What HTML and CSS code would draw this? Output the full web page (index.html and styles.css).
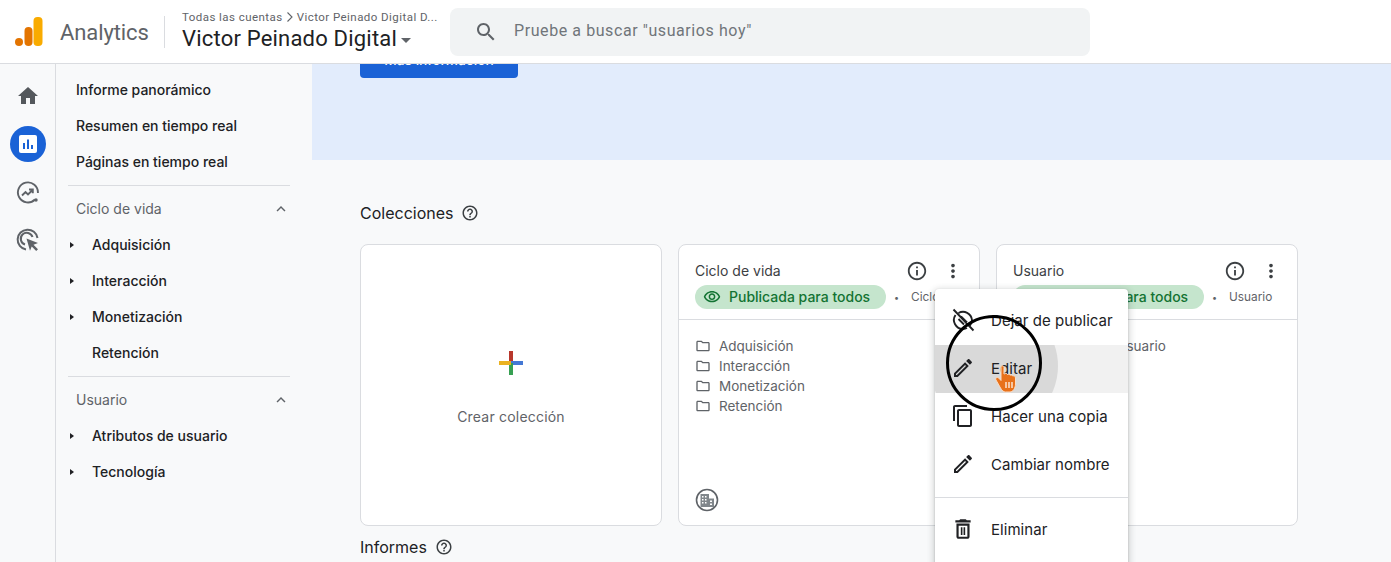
FILE: index.html
```html
<!DOCTYPE html>
<html lang="es">
<head>
<meta charset="utf-8">
<title>Analytics</title>
<link rel="stylesheet" href="styles.css">
</head>
<body>
<svg class="defs" width="0" height="0" aria-hidden="true">
  <symbol id="i-home" viewBox="0 0 24 24"><path d="M10 20v-6h4v6h5v-8h3L12 3 2 12h3v8z"/></symbol>
  <symbol id="i-info" viewBox="0 0 24 24"><path d="M11 7h2v2h-2zm0 4h2v6h-2zm1-9C6.48 2 2 6.48 2 12s4.48 10 10 10 10-4.48 10-10S17.52 2 12 2zm0 18c-4.41 0-8-3.59-8-8s3.59-8 8-8 8 3.59 8 8-3.59 8-8 8z"/></symbol>
  <symbol id="i-more" viewBox="0 0 24 24"><path d="M12 8c1.1 0 2-.9 2-2s-.9-2-2-2-2 .9-2 2 .9 2 2 2zm0 2c-1.1 0-2 .9-2 2s.9 2 2 2 2-.9 2-2-.9-2-2-2zm0 6c-1.1 0-2 .9-2 2s.9 2 2 2 2-.9 2-2-.9-2-2-2z"/></symbol>
  <symbol id="i-search" viewBox="0 0 24 24"><path d="M15.5 14h-.79l-.28-.27C15.41 12.59 16 11.11 16 9.5 16 5.91 13.09 3 9.5 3S3 5.91 3 9.5 5.91 16 9.5 16c1.61 0 3.09-.59 4.23-1.57l.27.28v.79l5 4.99L20.49 19l-4.99-5zm-6 0C7.01 14 5 11.99 5 9.5S7.01 5 9.5 5 14 7.01 14 9.5 11.99 14 9.5 14z"/></symbol>
  <symbol id="i-eye" viewBox="0 0 24 24"><path d="M12 6c3.79 0 7.17 2.13 8.82 5.5C19.17 14.87 15.79 17 12 17s-7.17-2.13-8.82-5.5C4.83 8.13 8.21 6 12 6m0-2C7 4 2.73 7.11 1 11.5 2.73 15.89 7 19 12 19s9.27-3.11 11-7.5C21.27 7.11 17 4 12 4zm0 5c1.38 0 2.5 1.12 2.5 2.5S13.38 14 12 14s-2.5-1.12-2.5-2.5S10.62 9 12 9m0-2c-2.48 0-4.5 2.02-4.5 4.5S9.52 16 12 16s4.5-2.02 4.5-4.5S14.48 7 12 7z"/></symbol>
  <symbol id="i-folder" viewBox="0 0 24 24"><path d="M9.17 6l2 2H20v10H4V6h5.17M10 4H4c-1.1 0-1.99.9-1.99 2L2 18c0 1.1.9 2 2 2h16c1.1 0 2-.9 2-2V8c0-1.1-.9-2-2-2h-8l-2-2z"/></symbol>
  <symbol id="i-edit" viewBox="0 0 24 24"><path d="M14.06 9.02l.92.92L5.92 19H5v-.92l9.06-9.06M17.66 3c-.25 0-.51.1-.7.29l-1.83 1.83 3.75 3.75 1.83-1.83c.39-.39.39-1.02 0-1.41l-2.34-2.34c-.2-.2-.45-.29-.71-.29zm-3.6 3.19L3 17.25V21h3.75L17.81 9.94l-3.75-3.75z"/></symbol>
  <symbol id="i-copy" viewBox="0 0 24 24"><path d="M16 1H4c-1.1 0-2 .9-2 2v14h2V3h12V1zm3 4H8c-1.1 0-2 .9-2 2v14c0 1.1.9 2 2 2h11c1.1 0 2-.9 2-2V7c0-1.1-.9-2-2-2zm0 16H8V7h11v14z"/></symbol>
  <symbol id="i-delete" viewBox="1 1 22 22"><path d="M16 9v10H8V9h8m-1.500-6h-5l-1 1H5v2h14V4h-3.500l-1-1zM18 7H6v12c0 1.100.9 2 2 2h8c1.100 0 2-.9 2-2V7zM10 10.500h1.500v7H10zM12.500 10.500H14v7h-1.500z"/></symbol>
  <symbol id="i-help" viewBox="0 0 24 24"><path d="M11 18h2v-2h-2v2zm1-16C6.48 2 2 6.48 2 12s4.48 10 10 10 10-4.48 10-10S17.52 2 12 2zm0 18c-4.41 0-8-3.59-8-8s3.59-8 8-8 8 3.59 8 8-3.59 8-8 8zm0-14c-2.21 0-4 1.79-4 4h2c0-1.100.9-2 2-2s2 .9 2 2c0 2-3 1.750-3 5h2c0-2.250 3-2.500 3-5 0-2.210-1.790-4-4-4z"/></symbol>
  <symbol id="i-less" viewBox="0 0 24 24"><path d="M12 8l-6 6 1.410 1.410L12 10.830l4.590 4.580L18 14z"/></symbol>
  <symbol id="i-unpub" viewBox="0 0 24 24"><path fill="none" stroke="currentColor" stroke-width="1.900" d="M7.500 5A9 9 0 0 1 21 12a9 9 0 0 1-2 5.500M4.500 7A9 9 0 0 0 12 21c1.500 0 3-.4 4-1M2.500 1.500l20 21M7.500 11l5.500 5.500M10 8.500l6 6"/></symbol>
</svg>

<header class="topbar">
  <div class="brand">
    <svg class="logo" width="28" height="32" viewBox="0 0 28 32" aria-hidden="true">
      <circle cx="4" cy="26" r="4" fill="#e37400"/>
      <rect x="9.500" y="11" width="8" height="19" rx="4" fill="#e37400"/>
      <rect x="18.500" y="1" width="9" height="29" rx="4" fill="#f9ab00"/>
    </svg>
    <span class="brand-name">Analytics</span>
  </div>
  <div class="account">
    <div class="crumbs">Todas las cuentas <svg class="crumb-sep" width="8" height="12" viewBox="0 0 8 12" aria-hidden="true"><path d="M1.500 1.500 6 6l-4.500 4.500" fill="none" stroke="#5f6368" stroke-width="1.100"/></svg> Victor Peinado Digital D...</div>
    <div class="account-name">Victor Peinado Digital<span class="caret"></span></div>
  </div>
  <div class="search">
    <svg class="search-icon"><use href="#i-search"/></svg>
    <span>Pruebe a buscar "usuarios hoy"</span>
  </div>
</header>

<div class="shell">
  <aside class="rail">
    <div class="rail-item"><svg class="rail-icon rail-home"><use href="#i-home"/></svg></div>
    <div class="rail-item">
      <span class="rail-active">
        <svg width="22" height="22" viewBox="0 0 22 22" aria-hidden="true"><rect x="2" y="2" width="18" height="18" rx="2" fill="#fff"/><path d="M6 10h2v6H6zM10 6.500h2V16h-2zM14 12h2v4h-2z" fill="#1a62d6"/></svg>
      </span>
    </div>
    <div class="rail-item">
      <svg class="rail-icon" viewBox="0 0 24 24" aria-hidden="true"><g fill="none" stroke="#5f6368" stroke-width="1.900"><path d="M19 19.500A10 10 0 1 1 21.900 13"/><path d="M6 15.500l3.500-3.500 2.500 2.500 4.500-4.500M13 9.500h3.800v3.800"/></g><circle cx="20" cy="20" r="1.700" fill="#5f6368"/></svg>
    </div>
    <div class="rail-item">
      <svg class="rail-icon" viewBox="0 0 24 24" aria-hidden="true"><g fill="none" stroke="#5f6368" stroke-width="2"><path d="M21.500 10A10 10 0 1 0 10 21.500"/><path d="M16.500 9A6 6 0 1 0 9 16.500"/></g><path d="M10.500 10.500l11.500 4.500-4.500 1.800 4.500 4.500-1.800 1.800-4.500-4.500-1.700 4.200z" fill="#5f6368"/></svg>
    </div>
  </aside>

  <nav class="sidenav">
    <a class="nav-row">Informe panorámico</a>
    <a class="nav-row">Resumen en tiempo real</a>
    <a class="nav-row">Páginas en tiempo real</a>
    <hr class="nav-rule">
    <div class="nav-row nav-head">Ciclo de vida<svg class="chev"><use href="#i-less"/></svg></div>
    <a class="nav-row nav-sub"><span class="tri"></span>Adquisición</a>
    <a class="nav-row nav-sub"><span class="tri"></span>Interacción</a>
    <a class="nav-row nav-sub"><span class="tri"></span>Monetización</a>
    <a class="nav-row nav-sub"><span class="tri tri-none"></span>Retención</a>
    <hr class="nav-rule">
    <div class="nav-row nav-head">Usuario<svg class="chev"><use href="#i-less"/></svg></div>
    <a class="nav-row nav-sub"><span class="tri"></span>Atributos de usuario</a>
    <a class="nav-row nav-sub"><span class="tri"></span>Tecnología</a>
  </nav>

  <main class="main">
    <section class="banner"><button class="cta">Más información</button></section>
    <h2 class="section-title sec-first">Colecciones<svg class="help"><use href="#i-help"/></svg></h2>
    <div class="cards">
      <article class="card card-create">
        <svg class="plus" width="24" height="24" viewBox="0 0 24 24" aria-hidden="true">
          <rect x="10" y="0" width="4" height="12" fill="#b8372c"/>
          <rect x="12" y="10" width="12" height="4" fill="#4478d4"/>
          <rect x="10" y="12" width="4" height="12" fill="#37a052"/>
          <rect x="0" y="10" width="12" height="4" fill="#eab221"/>
        </svg>
        <span class="create-label">Crear colección</span>
      </article>

      <article class="card">
        <div class="card-top">
          <div class="card-title-row"><span class="card-title">Ciclo de vida</span><svg class="tool tool-info"><use href="#i-info"/></svg><svg class="tool"><use href="#i-more"/></svg></div>
          <div class="chip-row"><span class="chip"><svg class="chip-eye"><use href="#i-eye"/></svg>Publicada para todos</span><span class="dot">•</span><span class="meta">Ciclo de vida</span></div>
        </div>
        <ul class="folders">
          <li><svg class="folder"><use href="#i-folder"/></svg>Adquisición</li>
          <li><svg class="folder"><use href="#i-folder"/></svg>Interacción</li>
          <li><svg class="folder"><use href="#i-folder"/></svg>Monetización</li>
          <li><svg class="folder"><use href="#i-folder"/></svg>Retención</li>
        </ul>
        <svg class="org" width="24" height="24" viewBox="0 0 24 24" aria-hidden="true">
          <circle cx="12" cy="12" r="10.500" fill="#fff" stroke="#5f6368" stroke-width="1.600"/>
          <path d="M5.500 6h8.500v13H5.500zM14 10.500h5V19h-5z" fill="#80868b"/>
          <path d="M7 8h1.500v1.500H7zM10 8h1.500v1.500H10zM7 11h1.500v1.500H7zM10 11h1.500v1.500H10zM7 14h1.500v1.500H7zM10 14h1.500v1.500H10zM15 12.500h2V14h-2zM15 15.500h2V17h-2z" fill="#fff"/>
        </svg>
      </article>

      <article class="card">
        <div class="card-top">
          <div class="card-title-row"><span class="card-title">Usuario</span><svg class="tool tool-info"><use href="#i-info"/></svg><svg class="tool"><use href="#i-more"/></svg></div>
          <div class="chip-row"><span class="chip"><svg class="chip-eye"><use href="#i-eye"/></svg>Publicada para todos</span><span class="dot">•</span><span class="meta">Usuario</span></div>
        </div>
        <ul class="folders">
          <li><svg class="folder"><use href="#i-folder"/></svg>Atributos de usuario</li>
        </ul>
      </article>
    </div>
    <h2 class="section-title sec-second">Informes<svg class="help"><use href="#i-help"/></svg></h2>
  </main>
</div>

<div class="menu">
  <div class="menu-row"><svg class="menu-icon"><use href="#i-unpub"/></svg>Dejar de publicar</div>
  <div class="menu-row menu-hover"><span class="ripple"></span><svg class="menu-icon"><use href="#i-edit"/></svg><span class="menu-text">Editar</span></div>
  <div class="menu-row"><svg class="menu-icon"><use href="#i-copy"/></svg>Hacer una copia</div>
  <div class="menu-row"><svg class="menu-icon"><use href="#i-edit"/></svg>Cambiar nombre</div>
  <hr class="menu-rule">
  <div class="menu-row"><svg class="menu-icon"><use href="#i-delete"/></svg>Eliminar</div>
</div>
<div class="spot"></div>
<svg class="hand" width="24" height="30" viewBox="0 0 24 30" aria-hidden="true">
  <path d="M6 3.500c0-2.200 3-2.200 3 0V10l1.500-.5c1-.3 1.800.3 2 1 .8-.5 2-.3 2.500.7.900-.5 2.300-.2 2.700.8 1-.5 2.800.2 2.800 2v6c0 4-2.500 8-5.500 8h-4.500c-2 0-3.500-1.500-5-4L1 16c-1-1.800 1.200-3.500 2.700-2L6 16.500z" fill="#e8711a" stroke="#fbdcc4" stroke-width="1"/>
  <path d="M11 18v6M14 18v6M17 18v6" stroke="#fff" stroke-width="1.200" fill="none"/>
</svg>
</body>
</html>
```
FILE: styles.css
```css
* { box-sizing: border-box; }
html, body { height: 100%; }
body {
  margin: 0;
  height: 562px;
  overflow: hidden;
  position: relative;
  background: #f8f9fa;
  color: #202124;
  font-family: Inter, Roboto, "Liberation Sans", sans-serif;
  font-size: 14px;
}
.defs { position: absolute; }
svg { fill: currentColor; display: block; flex: none; }

.topbar {
  height: 64px;
  display: flex;
  align-items: center;
  background: #fff;
  border-bottom: 1px solid #dadce0;
  position: relative;
  z-index: 2;
}
.brand {
  display: flex;
  align-items: center;
  width: 165px;
  height: 32px;
  padding-left: 15px;
  border-right: 1px solid #dadce0;
}
.logo { margin-right: 17px; }
.brand-name { font-family: Roboto, sans-serif; font-size: 22px; letter-spacing: -.1px; color: #5f6368; position: relative; top: 1px; }
.account { width: 268px; margin-left: 17px; }
.crumbs {
  display: flex;
  align-items: center;
  gap: 3px;
  font-family: Roboto, sans-serif;
  font-size: 11.5px;
  line-height: 16px;
  margin-top: -2px;
  color: #5f6368;
  letter-spacing: .45px;
  white-space: nowrap;
}
.account-name {
  display: flex;
  align-items: center;
  font-family: Roboto, sans-serif;
  font-size: 22px;
  line-height: 28px;
  color: #202124;
  letter-spacing: .2px;
  white-space: nowrap;
}
.caret {
  margin-left: 4px;
  margin-top: 3px;
  border: 5px solid transparent;
  border-top-color: #5f6368;
  border-bottom-width: 0;
}
.search {
  width: 640px;
  height: 48px;
  display: flex;
  align-items: center;
  background: #f1f3f4;
  border-radius: 8px;
  padding-left: 24px;
  font-family: Roboto, sans-serif;
  font-size: 16px;
  letter-spacing: .58px;
  color: #70757a;
}
.search span { position: relative; top: -1px; }
.search-icon { width: 24px; height: 24px; margin-right: 16px; color: #5f6368; }

.shell { display: flex; height: 498px; }
.rail {
  width: 56px;
  flex: none;
  padding-top: 8px;
  border-right: 1px solid #dadce0;
  display: flex;
  flex-direction: column;
}
.rail-item { height: 48px; display: flex; align-items: center; justify-content: center; }
.rail-icon { width: 24px; height: 24px; color: #5f6368; }
.rail-home { color: #54585c; }
.rail-active {
  width: 36px;
  height: 36px;
  border-radius: 50%;
  background: #1a62d6;
  display: flex;
  align-items: center;
  justify-content: center;
}

.sidenav { width: 256px; flex: none; padding: 8px 0 0 12px; }
.nav-row {
  height: 36px;
  display: flex;
  align-items: center;
  padding: 0 0 2px 8px;
  font-weight: 500;
  font-size: 14px;
  color: #202124;
}
.nav-sub { padding-left: 0; }
.nav-head { font-weight: 400; color: #5f6368; justify-content: space-between; width: 222px; }
.tri {
  display: block;
  height: 0;
  width: 0;
  border: solid transparent;
  border-width: 3.500px 0 3.500px 4px;
  border-left-color: #202124;
  margin: 2px 18px 0 2px;
}
.tri-none { border-left-color: transparent; }
.chev { width: 18px; height: 18px; margin-top: 2px; color: #5f6368; }
.nav-rule { border: 0; border-top: 1px solid #dadce0; margin: 5px 0 5px 0; width: 222px; }

.main { flex: 1; min-width: 0; overflow: hidden; }
.banner { height: 96px; background: #e2ecfc; padding-left: 48px; overflow: hidden; }
.cta {
  display: block;
  width: 158px;
  height: 36px;
  margin-top: -22px;
  border: 0;
  border-radius: 4px;
  background: #1a62d6;
  color: #fff;
  font: 500 13.7px Inter, sans-serif;
}
.section-title {
  display: flex;
  align-items: center;
  height: 24px;
  margin: 0 0 0 48px;
  font-size: 16px;
  font-weight: 400;
  color: #202124;
}
.sec-first { margin-top: 41px; }
.sec-second { margin-top: 9px; }
.help { width: 18px; height: 18px; margin-left: 8px; color: #3c4043; }

.cards {
  display: grid;
  grid-template-columns: repeat(3, 302px);
  gap: 16px;
  margin: 19px 0 0 48px;
}
.card {
  height: 282px;
  background: #fff;
  border: 1px solid #dadce0;
  border-radius: 8px;
  position: relative;
}
.card-create {
  display: flex;
  flex-direction: column;
  align-items: center;
  padding-top: 106px;
}
.create-label { margin-top: 33px; font-size: 14px; letter-spacing: .2px; color: #5f6368; }
.card-top { height: 75px; border-bottom: 1px solid #dadce0; padding: 14px 0 0 16px; }
.card-title-row { display: flex; align-items: center; height: 24px; padding-right: 15px; }
.card-title { flex: 1; padding-bottom: 2px; font-size: 14px; color: #3c4043; }
.tool { width: 22px; height: 22px; color: #3c4043; }
.tool-info { margin-right: 14px; }
.chip-row { display: flex; align-items: center; height: 24px; margin-top: 2px; white-space: nowrap; overflow: hidden; }
.chip {
  display: flex;
  flex: none;
  align-items: center;
  width: 191px;
  height: 24px;
  padding: 0 0 2px 8px;
  border-radius: 12px;
  background: #c5e5cd;
  color: #137333;
  font-weight: 500;
  font-size: 14px;
}
.chip-eye { width: 18px; height: 18px; margin: 2px 8px 0 0; }
.dot { font-size: 9px; color: #5f6368; margin: 0 12px 0 8px; }
.meta { font-size: 11.8px; color: #5f6368; }
.folders { list-style: none; margin: 0; padding: 16px 0 0 16px; }
.folders li {
  display: flex;
  align-items: center;
  height: 20px;
  font-size: 13.5px;
  color: #5f6368;
}
.folder { width: 16px; height: 16px; margin-right: 8px; color: #5f6368; }
.org { position: absolute; left: 16px; bottom: 13px; }

.menu {
  position: absolute;
  left: 935px;
  top: 289px;
  width: 193px;
  height: 280px;
  padding-top: 7px;
  background: #fff;
  border-radius: 4px;
  box-shadow: 0 2px 6px 2px rgba(60,64,67,.2), 0 1px 2px rgba(60,64,67,.3);
  z-index: 3;
}
.menu-row {
  height: 48px;
  display: flex;
  align-items: center;
  padding-left: 16px;
  font-size: 15px;
  letter-spacing: .05px;
  color: #202124;
  position: relative;
  overflow: hidden;
}
.menu-hover { background: #f1f1f1; margin-top: 1px; padding-bottom: 2px; margin-bottom: -1px; }
.ripple {
  position: absolute;
  left: -5px;
  top: -43px;
  width: 128px;
  height: 128px;
  border-radius: 50%;
  background: #d9d9d9;
}
.menu-icon { width: 24px; height: 24px; margin-right: 16px; position: relative; }
.menu-text { position: relative; }
.menu-rule { border: 0; border-top: 1px solid #dadce0; margin: 9px 0 7px; }
.spot {
  position: absolute;
  left: 946px;
  top: 315px;
  width: 96px;
  height: 96px;
  border: 3px solid #000;
  border-radius: 50%;
  z-index: 4;
}
.hand { position: absolute; left: 995px; top: 364px; z-index: 5; }
```
